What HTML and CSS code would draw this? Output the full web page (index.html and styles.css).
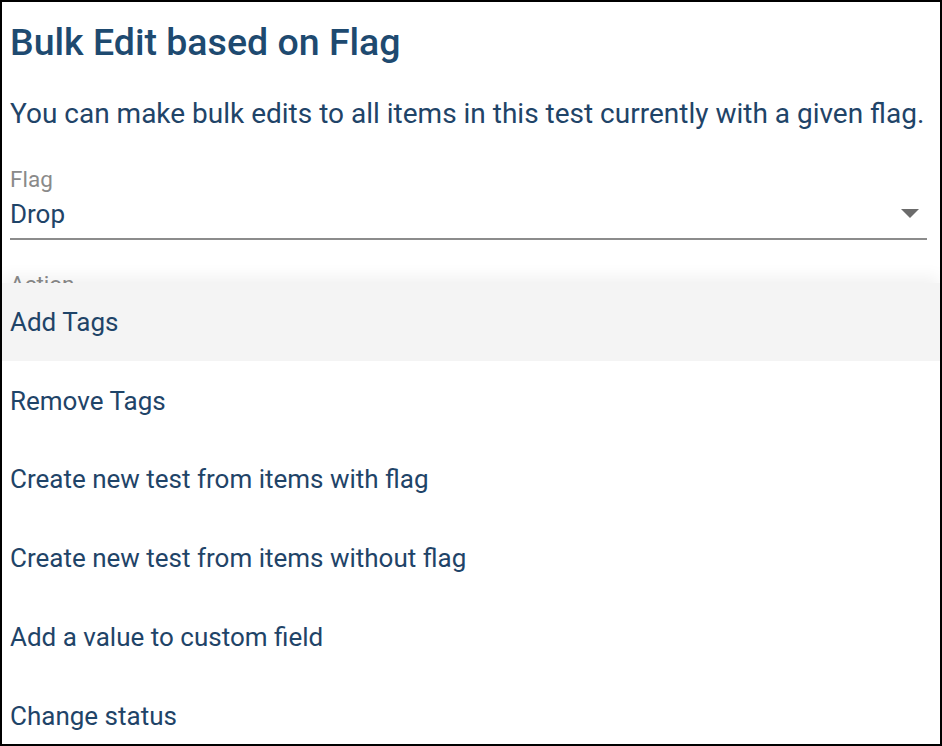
FILE: index.html
```html
<!DOCTYPE html>
<html lang="en">
<head>
<meta charset="utf-8">
<title>Bulk Edit based on Flag</title>
<link rel="stylesheet" href="styles.css">
</head>
<body>
<div class="frame">
  <h1 class="title">Bulk Edit based on Flag</h1>
  <p class="desc">You can make bulk edits to all items in this test currently with a given flag.</p>
  <div class="field">
    <div class="field-label">Flag</div>
    <div class="select">
      <span class="select-value">Drop</span>
      <svg class="caret" width="18" height="9" viewBox="0 0 18 9"><path d="M0 0 L18 0 L9 9 Z" fill="#6b6b6b"/></svg>
    </div>
  </div>
  <div class="field action">
    <div class="field-label">Action</div>
  </div>
  <ul class="menu">
    <li class="menu-item active">Add Tags</li>
    <li class="menu-item">Remove Tags</li>
    <li class="menu-item">Create new test from items with flag</li>
    <li class="menu-item">Create new test from items without flag</li>
    <li class="menu-item">Add a value to custom field</li>
    <li class="menu-item">Change status</li>
  </ul>
</div>
</body>
</html>
```
FILE: styles.css
```css
html, body {
  margin: 0;
  padding: 0;
  background: #fff;
}
.frame {
  position: relative;
  width: 942px;
  height: 746px;
  box-sizing: border-box;
  border: 2px solid #000;
  overflow: hidden;
  padding: 0 13px 0 8px;
  font-family: Roboto, "Liberation Sans", sans-serif;
  color: #1f4468;
}
.title {
  margin: 18px 0 0 0;
  font-size: 37.5px;
  line-height: 44px;
  font-weight: 500;
  color: #1e4a70;
}
.desc {
  margin: 33px -10px 0 0;
  font-size: 28px;
  line-height: 34px;
  white-space: nowrap;
  color: #1f4468;
}
.field {
  margin-top: 35px;
}
.field-label {
  font-size: 22.5px;
  line-height: 26px;
  color: #8a8a8a;
}
.select {
  display: flex;
  align-items: center;
  justify-content: space-between;
  height: 43px;
  padding-bottom: 3px;
  border-bottom: 2px solid #8c8c8c;
}
.select-value {
  font-size: 26px;
  line-height: 30px;
  color: #1f4468;
}
.caret {
  margin-right: 8px;
}
.action {
  margin-top: 31px;
}
.menu {
  position: absolute;
  left: 0;
  right: 0;
  top: 280.5px;
  margin: 0;
  padding: 0;
  list-style: none;
  background: #fff;
  box-shadow: 0 -6px 16px rgba(0, 0, 0, 0.06);
}
.menu-item {
  height: 78.8px;
  display: flex;
  align-items: center;
  padding-left: 8px;
  font-size: 26px;
  color: #1f4468;
}
.menu-item.active {
  background: #f4f4f4;
}
```
